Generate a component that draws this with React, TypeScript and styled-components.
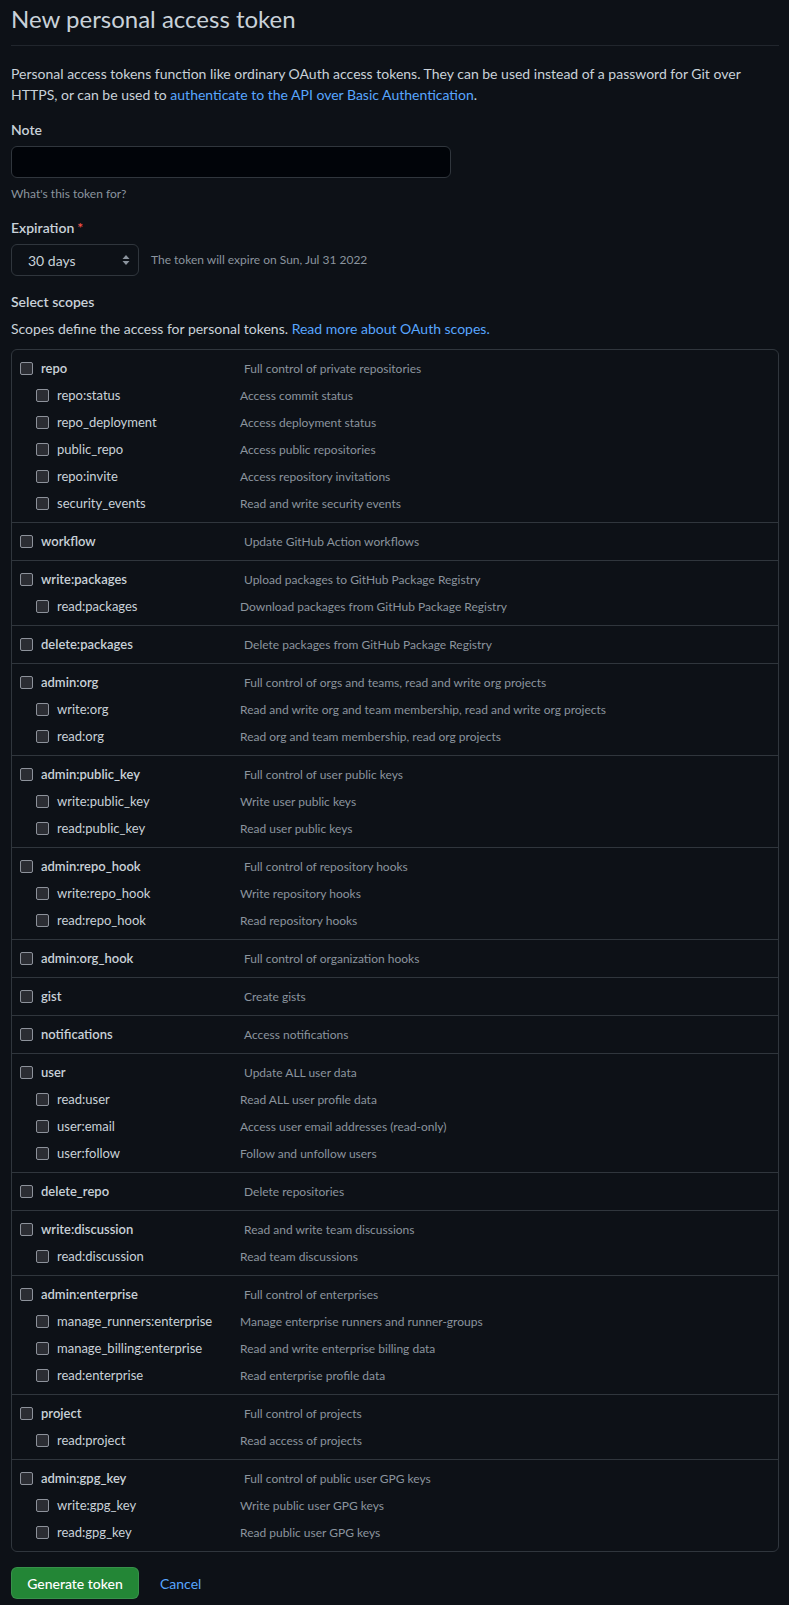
import React from 'react';
import styled, { createGlobalStyle } from 'styled-components';

const GlobalStyle = createGlobalStyle`
  html, body {
    margin: 0;
    padding: 0;
    background: #0d1117;
  }
  body {
    font-family: Lato, "Noto Sans", sans-serif;
    color: #c9d1d9;
    font-size: 14px;
    line-height: 1.5;
  }
`;

const Page = styled.div`
  width: 768px;
  padding: 0 10px 7px 11px;
`;

const Subhead = styled.div`
  border-bottom: 1px solid #21262d;
  padding-bottom: 8px;
  margin-bottom: 17px;
`;

const Heading = styled.h1`
  margin: 0;
  font-size: 24px;
  font-weight: 400;
  line-height: 37px;
  color: #c9d1d9;
`;

const Intro = styled.p`
  margin: 0 0 14px;
  font-size: 14px;
  line-height: 21px;
`;

const Link = styled.a`
  color: #58a6ff;
  text-decoration: none;
`;

const FormGroup = styled.div<{ $gap?: number }>`
  margin-bottom: ${p => p.$gap ?? 14}px;
`;

const Label = styled.label`
  display: block;
  font-weight: 600;
  font-size: 14px;
  line-height: 21px;
  margin-bottom: 6px;
`;

const Required = styled.span`
  color: #f85149;
  margin-left: 3px;
`;

const TextInput = styled.input`
  display: block;
  box-sizing: border-box;
  width: 440px;
  height: 32px;
  background: #010409;
  border: 1px solid #30363d;
  border-radius: 6px;
  color: #c9d1d9;
  outline: none;
`;

const Note = styled.p`
  margin: 7px 0 0;
  font-size: 12px;
  line-height: 18px;
  color: #8b949e;
`;

const SelectRow = styled.div`
  display: flex;
  align-items: center;
  gap: 12px;
`;

const Select = styled.div`
  box-sizing: border-box;
  width: 128px;
  height: 32px;
  display: flex;
  align-items: center;
  justify-content: space-between;
  padding: 0 8px 0 16px;
  border: 1px solid #30363d;
  border-radius: 6px;
  background: #0d1117;
  font-size: 14px;
`;

const Inline = styled.span`
  font-size: 12px;
  color: #8b949e;
`;

const ScopesIntro = styled.p`
  margin: 0 0 10px;
  font-size: 14px;
  line-height: 21px;
`;

const ScopeBox = styled.div`
  border: 1px solid #30363d;
  border-radius: 6px;
`;

const Group = styled.div`
  padding: 5px 0;
  & + & {
    border-top: 1px solid #30363d;
  }
`;

const Row = styled.div<{ $sub?: boolean }>`
  display: grid;
  grid-template-columns: ${p => (p.$sub ? '204px' : '224px')} 1fr;
  height: 27px;
  align-items: center;
  padding-left: ${p => (p.$sub ? '24px' : '8px')};
`;

const ScopeName = styled.label<{ $sub?: boolean }>`
  display: flex;
  align-items: center;
  gap: 8px;
  font-size: 13px;
  font-weight: ${p => (p.$sub ? 400 : 600)};
  color: #c9d1d9;
`;

const Box = styled.span`
  box-sizing: border-box;
  width: 13px;
  height: 13px;
  border: 1px solid #8d929b;
  border-radius: 2px;
  background: #2b2d33;
  flex-shrink: 0;
`;

const Desc = styled.span`
  font-size: 12px;
  color: #8b949e;
`;

const Actions = styled.div`
  display: flex;
  align-items: center;
  gap: 21px;
  margin-top: 15px;
`;

const PrimaryButton = styled.button`
  box-sizing: border-box;
  width: 128px;
  height: 32px;
  background: #238636;
  border: 1px solid rgba(240, 246, 252, 0.1);
  border-radius: 6px;
  color: #ffffff;
  font-family: inherit;
  font-size: 14px;
  font-weight: 500;
`;

type Scope = { name: string; desc: string; children?: Scope[] };

const scopes: Scope[] = [
  {
    name: 'repo',
    desc: 'Full control of private repositories',
    children: [
      { name: 'repo:status', desc: 'Access commit status' },
      { name: 'repo_deployment', desc: 'Access deployment status' },
      { name: 'public_repo', desc: 'Access public repositories' },
      { name: 'repo:invite', desc: 'Access repository invitations' },
      { name: 'security_events', desc: 'Read and write security events' },
    ],
  },
  { name: 'workflow', desc: 'Update GitHub Action workflows' },
  {
    name: 'write:packages',
    desc: 'Upload packages to GitHub Package Registry',
    children: [{ name: 'read:packages', desc: 'Download packages from GitHub Package Registry' }],
  },
  { name: 'delete:packages', desc: 'Delete packages from GitHub Package Registry' },
  {
    name: 'admin:org',
    desc: 'Full control of orgs and teams, read and write org projects',
    children: [
      { name: 'write:org', desc: 'Read and write org and team membership, read and write org projects' },
      { name: 'read:org', desc: 'Read org and team membership, read org projects' },
    ],
  },
  {
    name: 'admin:public_key',
    desc: 'Full control of user public keys',
    children: [
      { name: 'write:public_key', desc: 'Write user public keys' },
      { name: 'read:public_key', desc: 'Read user public keys' },
    ],
  },
  {
    name: 'admin:repo_hook',
    desc: 'Full control of repository hooks',
    children: [
      { name: 'write:repo_hook', desc: 'Write repository hooks' },
      { name: 'read:repo_hook', desc: 'Read repository hooks' },
    ],
  },
  { name: 'admin:org_hook', desc: 'Full control of organization hooks' },
  { name: 'gist', desc: 'Create gists' },
  { name: 'notifications', desc: 'Access notifications' },
  {
    name: 'user',
    desc: 'Update ALL user data',
    children: [
      { name: 'read:user', desc: 'Read ALL user profile data' },
      { name: 'user:email', desc: 'Access user email addresses (read-only)' },
      { name: 'user:follow', desc: 'Follow and unfollow users' },
    ],
  },
  { name: 'delete_repo', desc: 'Delete repositories' },
  {
    name: 'write:discussion',
    desc: 'Read and write team discussions',
    children: [{ name: 'read:discussion', desc: 'Read team discussions' }],
  },
  {
    name: 'admin:enterprise',
    desc: 'Full control of enterprises',
    children: [
      { name: 'manage_runners:enterprise', desc: 'Manage enterprise runners and runner-groups' },
      { name: 'manage_billing:enterprise', desc: 'Read and write enterprise billing data' },
      { name: 'read:enterprise', desc: 'Read enterprise profile data' },
    ],
  },
  {
    name: 'project',
    desc: 'Full control of projects',
    children: [{ name: 'read:project', desc: 'Read access of projects' }],
  },
  {
    name: 'admin:gpg_key',
    desc: 'Full control of public user GPG keys',
    children: [
      { name: 'write:gpg_key', desc: 'Write public user GPG keys' },
      { name: 'read:gpg_key', desc: 'Read public user GPG keys' },
    ],
  },
];

const ScopeRow = ({ scope, sub }: { scope: Scope; sub?: boolean }) => (
  <Row $sub={sub}>
    <ScopeName $sub={sub}>
      <Box />
      {scope.name}
    </ScopeName>
    <Desc>{scope.desc}</Desc>
  </Row>
);

const Arrows = () => (
  <svg width="8" height="12" viewBox="0 0 8 12">
    <path d="M4 1 L7.5 5 H0.5 Z" fill="#8b949e" />
    <path d="M4 11 L7.5 7 H0.5 Z" fill="#8b949e" />
  </svg>
);

export default function App() {
  return (
    <Page>
      <GlobalStyle />
      <Subhead>
        <Heading>New personal access token</Heading>
      </Subhead>
      <Intro>
        Personal access tokens function like ordinary OAuth access tokens. They can be used instead of a password for Git over
        HTTPS, or can be used to <Link href="#">authenticate to the API over Basic Authentication</Link>.
      </Intro>
      <FormGroup>
        <Label>Note</Label>
        <TextInput />
        <Note>What's this token for?</Note>
      </FormGroup>
      <FormGroup $gap={15}>
        <Label>
          Expiration<Required>*</Required>
        </Label>
        <SelectRow>
          <Select>
            30 days
            <Arrows />
          </Select>
          <Inline>The token will expire on Sun, Jul 31 2022</Inline>
        </SelectRow>
      </FormGroup>
      <Label>Select scopes</Label>
      <ScopesIntro>
        Scopes define the access for personal tokens. <Link href="#">Read more about OAuth scopes.</Link>
      </ScopesIntro>
      <ScopeBox>
        {scopes.map(s => (
          <Group key={s.name}>
            <ScopeRow scope={s} />
            {s.children?.map(c => (
              <ScopeRow key={c.name} scope={c} sub />
            ))}
          </Group>
        ))}
      </ScopeBox>
      <Actions>
        <PrimaryButton>Generate token</PrimaryButton>
        <Link href="#">Cancel</Link>
      </Actions>
    </Page>
  );
}
